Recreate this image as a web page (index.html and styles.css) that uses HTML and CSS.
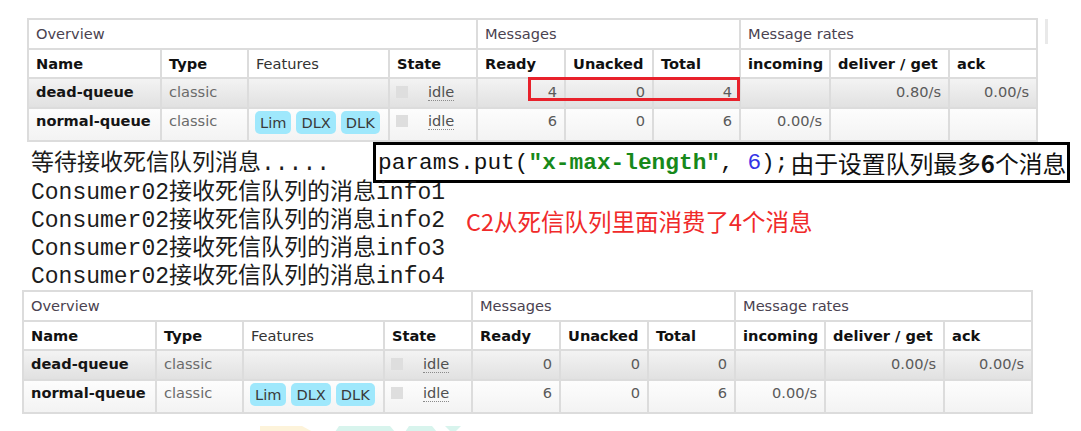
FILE: index.html
```html
<!DOCTYPE html>
<html lang="zh">
<head>
<meta charset="utf-8">
<title>Queues</title>
<link rel="stylesheet" href="styles.css">
</head>
<body>
<div class="top">
  <div class="wrap">
    <table class="queues">
      <colgroup>
        <col class="c-name"><col class="c-type"><col class="c-feat"><col class="c-state">
        <col class="c-ready"><col class="c-unacked"><col class="c-total">
        <col class="c-in"><col class="c-deliver"><col class="c-ack">
      </colgroup>
      <tr class="group"><th colspan="4">Overview</th><th colspan="3">Messages</th><th colspan="3">Message rates</th></tr>
      <tr class="head"><th>Name</th><th>Type</th><th class="plain">Features</th><th>State</th><th>Ready</th><th>Unacked</th><th>Total</th><th>incoming</th><th>deliver / get</th><th>ack</th></tr>
      <tr class="r-dead">
        <td class="name">dead-queue</td><td class="type">classic</td><td></td>
        <td class="state"><span class="sq"></span><span class="idle">idle</span></td>
        <td class="n">4</td><td class="n">0</td><td class="n">4</td><td class="n"></td><td class="n">0.80/s</td><td class="n">0.00/s</td>
      </tr>
      <tr class="r-normal">
        <td class="name">normal-queue</td><td class="type">classic</td>
        <td class="feat"><span class="badge">Lim</span><span class="badge">DLX</span><span class="badge">DLK</span></td>
        <td class="state"><span class="sq"></span><span class="idle">idle</span></td>
        <td class="n">6</td><td class="n">0</td><td class="n">6</td><td class="n">0.00/s</td><td class="n"></td><td class="n"></td>
      </tr>
    </table>
    <div class="redbox"></div>
  </div>
  <div class="scroll"></div>
</div>

<div class="console">
  <div class="row1">
    <div class="wait">等待接收死信队列消息.....</div>
    <div class="note-box"><span class="code">params.put(<span class="str">"x-max-length"</span>, <span class="num">6</span>);</span><span class="ann">由于设置队列最多<b>6</b>个消息</span></div>
  </div>
  <div class="line">Consumer02接收死信队列的消息info1</div>
  <div class="line"><span>Consumer02接收死信队列的消息info2</span><span class="red">C2从死信队列里面消费了4个消息</span></div>
  <div class="line">Consumer02接收死信队列的消息info3</div>
  <div class="line">Consumer02接收死信队列的消息info4</div>
</div>

<div class="bottom">
  <table class="queues">
    <colgroup>
      <col class="c-name"><col class="c-type"><col class="c-feat"><col class="c-state">
      <col class="c-ready"><col class="c-unacked"><col class="c-total">
      <col class="c-in"><col class="c-deliver"><col class="c-ack">
    </colgroup>
    <tr class="group"><th colspan="4">Overview</th><th colspan="3">Messages</th><th colspan="3">Message rates</th></tr>
    <tr class="head"><th>Name</th><th>Type</th><th class="plain">Features</th><th>State</th><th>Ready</th><th>Unacked</th><th>Total</th><th>incoming</th><th>deliver / get</th><th>ack</th></tr>
    <tr class="r-dead">
      <td class="name">dead-queue</td><td class="type">classic</td><td></td>
      <td class="state"><span class="sq"></span><span class="idle">idle</span></td>
      <td class="n">0</td><td class="n">0</td><td class="n">0</td><td class="n"></td><td class="n">0.00/s</td><td class="n">0.00/s</td>
    </tr>
    <tr class="r-normal">
      <td class="name">normal-queue</td><td class="type">classic</td>
      <td class="feat"><span class="badge">Lim</span><span class="badge">DLX</span><span class="badge">DLK</span></td>
      <td class="state"><span class="sq"></span><span class="idle">idle</span></td>
      <td class="n">6</td><td class="n">0</td><td class="n">6</td><td class="n">0.00/s</td><td class="n"></td><td class="n"></td>
    </tr>
  </table>
</div>

<svg class="watermark" width="1081" height="8" viewBox="0 424 1081 8" aria-hidden="true">
  <polygon points="260,426 302,426 313,432 260,432" fill="#fdf3da"/>
  <polygon points="339,426 390,426 395,432 335,432" fill="#d8f4ed"/>
  <polygon points="409,426 432,426 437,432 405,432" fill="#d8f4ed"/>
  <polygon points="445,426 461,426 455,432 451,432" fill="#d8f4ed"/>
</svg>
</body>
</html>
```

FILE: styles.css
```css
* { box-sizing: border-box; }

html, body {
  margin: 0;
  background: #ffffff;
}

body {
  width: 1081px;
  height: 431px;
  overflow: hidden;
  position: relative;
  font-family: "DejaVu Sans", Verdana, sans-serif;
}

/* ---------- tables ---------- */
.top {
  display: flex;
  align-items: flex-start;
  padding: 18px 0 0 27px;
}

.wrap { position: relative; }

.scroll {
  width: 3px;
  height: 25px;
  margin: 1px 0 0 7px;
  background: #e9e9e9;
}

.bottom {
  padding: 0 0 0 22px;
  margin-top: -1px;
}

table.queues {
  border-collapse: collapse;
  table-layout: fixed;
  width: 1009px;
  font-size: 14.6px;
  color: #444;
}

.c-name { width: 133px; }
.c-type { width: 87px; }
.c-feat { width: 141px; }
.c-state { width: 88px; }
.c-ready { width: 88px; }
.c-unacked { width: 88px; }
.c-total { width: 87px; }
.c-in { width: 90px; }
.c-deliver { width: 119px; }
.c-ack { width: 88px; }

.queues th,
.queues td {
  border: 2px solid #dcdcdc;
  padding: 5px 7px 0 7px;
  vertical-align: top;
  line-height: 18px;
  text-align: left;
  white-space: nowrap;
  overflow: hidden;
}

.group th {
  height: 30px;
  font-weight: normal;
  color: #4a4250;
  background: #fff;
}

.head th {
  height: 29px;
  font-weight: bold;
  color: #111;
  background: #fff;
}

.head th.plain {
  font-weight: normal;
  color: #333;
}

.r-dead td {
  height: 30px;
  padding-top: 4px;
  background: linear-gradient(#f3f3f3, #e1e1e1);
}

.r-normal td {
  height: 33px;
  padding-top: 3px;
  background: linear-gradient(#fdfdfd, #f3f3f3);
}

.queues td.name {
  font-weight: bold;
  color: #151515;
}

.queues td.type { color: #6a6a6a; }

.queues td.n {
  text-align: right;
  color: #5a5a5a;
  padding-right: 7px;
}

.queues td.feat {
  padding: 2px 0 0 6px;
}

.badge {
  display: inline-block;
  height: 23px;
  line-height: 23px;
  padding: 0 5px;
  margin-right: 5px;
  border-radius: 5px;
  background: #9fe8fc;
  color: #3a3a3a;
}

.queues td.state { padding-left: 6px; }

.sq {
  display: inline-block;
  width: 12px;
  height: 12px;
  margin-top: 3px;
  vertical-align: top;
  background: #dedede;
}

.idle {
  display: inline-block;
  margin-left: 20px;
  line-height: 17px;
  color: #505050;
  border-bottom: 1px dotted #8a8a8a;
}

.redbox {
  position: absolute;
  left: 501px;
  top: 59px;
  width: 212px;
  height: 24px;
  border: 3px solid #e8212b;
}

/* ---------- console ---------- */
.console {
  padding-left: 31px;
  color: #1c1c1c;
  font-family: "Liberation Mono", "Noto Sans CJK SC", monospace;
  font-size: 23px;
  line-height: 28px;
}

.row1 {
  display: flex;
  height: 37px;
}

.wait {
  width: 342px;
  flex: none;
  margin-top: 8px;
}

.note-box {
  flex: none;
  display: flex;
  align-items: center;
  width: 697px;
  height: 41px;
  padding-left: 2px;
  border: 3px solid #000;
  color: #111;
  white-space: nowrap;
  overflow: hidden;
}

.code {
  flex: none;
  font-size: 22.8px;
  white-space: pre;
}

.code .str {
  color: #17891a;
  font-weight: bold;
}

.code .num { color: #3434e6; }

.ann {
  flex: none;
  margin-left: 2px;
  font-family: "Noto Sans CJK SC", sans-serif;
  font-size: 23.8px;
  color: #111;
}

.ann b { font-weight: bold; }

.line {
  display: flex;
  height: 28px;
  white-space: nowrap;
}

.red {
  margin-left: 21px;
  font-family: "Noto Sans CJK SC", sans-serif;
  font-size: 23.5px;
  color: #f02a2a;
}

.watermark {
  position: absolute;
  left: 0;
  top: 424px;
}
```
